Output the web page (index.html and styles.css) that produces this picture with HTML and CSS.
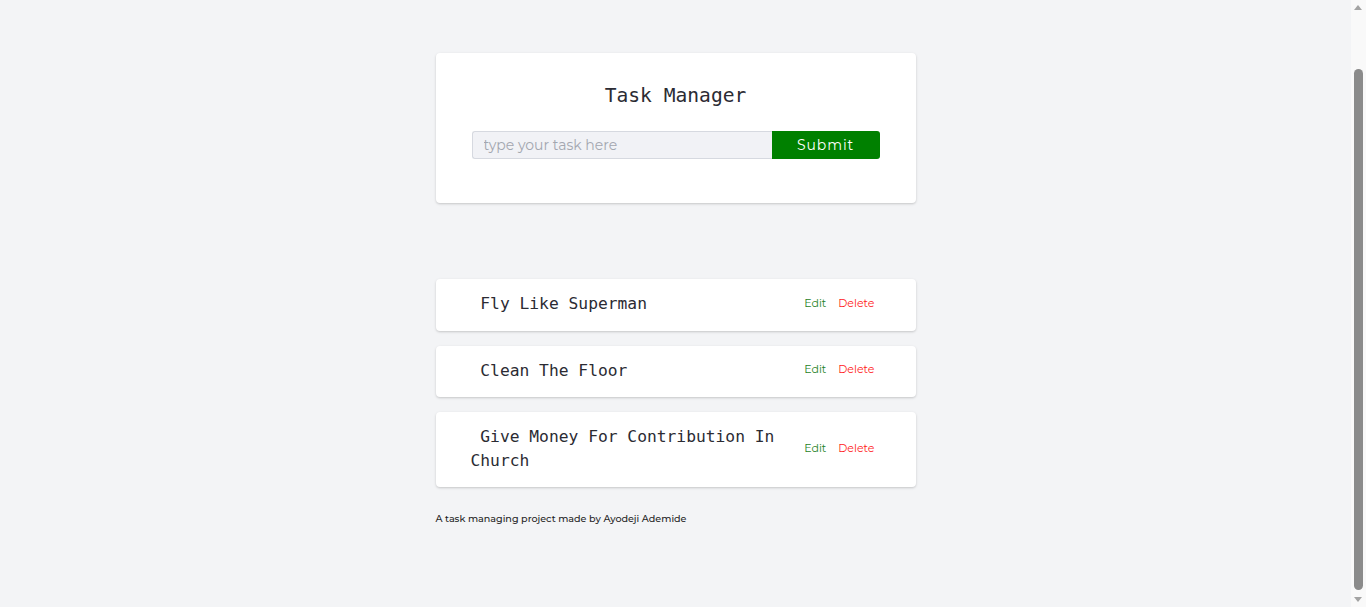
FILE: index.html
```html
<!DOCTYPE html>
<html lang="en">
<head>
<meta charset="utf-8">
<title>Task Manager</title>
<link rel="stylesheet" href="styles.css">
</head>
<body>
<main class="app">
  <section class="card header-card">
    <h1 class="title">Task Manager</h1>
    <form class="task-form">
      <input class="task-input" type="text" placeholder="type your task here">
      <button class="submit-btn" type="button">Submit</button>
    </form>
  </section>

  <ul class="task-list">
    <li class="card task">
      <p class="task-text">&nbsp;Fly Like Superman</p>
      <div class="task-actions">
        <button class="action edit" type="button">Edit</button>
        <button class="action delete" type="button">Delete</button>
      </div>
    </li>
    <li class="card task">
      <p class="task-text">&nbsp;Clean The Floor</p>
      <div class="task-actions">
        <button class="action edit" type="button">Edit</button>
        <button class="action delete" type="button">Delete</button>
      </div>
    </li>
    <li class="card task">
      <p class="task-text">&nbsp;Give Money For Contribution In Church</p>
      <div class="task-actions">
        <button class="action edit" type="button">Edit</button>
        <button class="action delete" type="button">Delete</button>
      </div>
    </li>
  </ul>

  <footer class="footer">A task managing project made by Ayodeji Ademide</footer>
</main>

<div class="scrollbar" aria-hidden="true">
  <span class="arrow arrow-up"></span>
  <span class="thumb"></span>
  <span class="arrow arrow-down"></span>
</div>
</body>
</html>
```
FILE: styles.css
```css
html {
  overflow: hidden;
}

body {
  margin: 0;
  padding-right: 15px;
  background: #f3f4f6;
  font-family: "Montserrat", Inter, "Noto Sans", sans-serif;
  color: #333;
}

.app {
  width: 480px;
  margin: 0 auto;
  padding: 53px 0 20px;
}

.card {
  background: #fff;
  border-radius: 4px;
  box-shadow: 0 1px 3px rgba(0, 0, 0, 0.14), 0 1px 2px rgba(0, 0, 0, 0.06);
}

.header-card {
  padding: 31px 36px 44px;
}

.title {
  margin: 0 0 24px;
  text-align: center;
  font-family: "DejaVu Sans Mono", "Liberation Mono", monospace;
  font-weight: normal;
  font-size: 19.6px;
  line-height: 23px;
  color: #2b2b33;
}

.task-form {
  display: flex;
  margin: 0;
}

.task-input {
  box-sizing: border-box;
  width: 300px;
  height: 28px;
  margin: 0;
  padding: 0 11px;
  border: 1px solid #d6d9e0;
  border-right: none;
  border-radius: 3px 0 0 3px;
  background: #f1f2f6;
  font-family: inherit;
  font-size: 14px;
  color: #333;
  outline: none;
}

.task-input::placeholder {
  color: #a3a7b0;
}

.submit-btn {
  width: 108px;
  height: 28px;
  margin: 0;
  padding: 0;
  border: none;
  border-radius: 0 3px 3px 0;
  background: #008000;
  color: #fff;
  font-family: inherit;
  font-size: 14px;
  letter-spacing: 0.9px;
  cursor: pointer;
}

.task-list {
  list-style: none;
  margin: 76px 0 0;
  padding: 0;
  display: flex;
  flex-direction: column;
  gap: 15px;
}

.task {
  display: flex;
  align-items: center;
  padding: 11px 41px 15px 35px;
}

.task-text {
  flex: 1;
  margin: 0;
  padding-top: 2px;
  font-family: "DejaVu Sans Mono", "Liberation Mono", monospace;
  font-size: 16.3px;
  line-height: 23.5px;
  color: #2b2b33;
}

.task-actions {
  display: flex;
  gap: 12px;
  margin-left: 16px;
}

.action {
  margin: 0;
  padding: 0;
  border: none;
  background: none;
  font-family: inherit;
  font-size: 11px;
  cursor: pointer;
}

.edit {
  color: #1f8226;
}

.delete {
  color: #ff1a1a;
}

.footer {
  margin-top: 25px;
  font-size: 9.6px;
  font-weight: 500;
  line-height: 13px;
  color: #1f1f1f;
}

/* fake browser scrollbar (overlays the window edge) */
.scrollbar {
  position: fixed;
  top: 0;
  right: 0;
  bottom: 0;
  width: 15px;
  background: #f9f9f9;
}

.thumb {
  position: absolute;
  left: 3px;
  width: 9px;
  top: 69px;
  bottom: 17px;
  border-radius: 5px;
  background: #8b8b8b;
}

.arrow {
  position: absolute;
  left: 3px;
  width: 0;
  height: 0;
  border-left: 4.5px solid transparent;
  border-right: 4.5px solid transparent;
}

.arrow-up {
  top: 5px;
  border-bottom: 5px solid #a3a3a3;
}

.arrow-down {
  bottom: 5px;
  border-top: 5px solid #a3a3a3;
}
```
